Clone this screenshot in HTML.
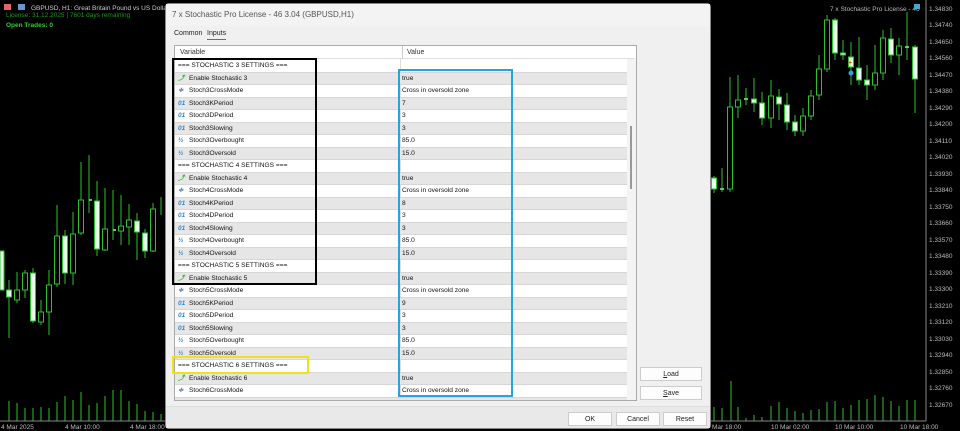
<!DOCTYPE html>
<html><head><meta charset="utf-8"><style>
*{margin:0;padding:0;box-sizing:border-box}
body{width:960px;height:431px;background:#000;position:relative;overflow:hidden;font-family:"Liberation Sans",sans-serif;font-size:7px}
.abs{position:absolute}
#dlg{left:165px;top:3px;width:546px;height:426px;background:#f0f0f0;border:1px solid #888;border-radius:4px}
#title{left:0;top:0;width:544px;height:22px;background:#f3f3f3;color:#555;font-size:8px;padding:6px 0 0 6px}
.tab{top:26px;font-size:7px;color:#222}
#tbl{left:8px;top:41px;width:463px;height:356px;background:#fff;border:1px solid #aaa;overflow:hidden}
.hdr{position:absolute;top:0;height:13px;left:0;width:460px;border-bottom:1px solid #ddd;background:#fff}
.row{position:absolute;left:0;width:452px;height:12.5px;line-height:12.5px;font-size:6.6px;color:#111}
.row.g{background:#e6e6e6;border-top:1px solid #d6d6d6;border-bottom:1px solid #d6d6d6}
.row span.v{position:absolute;left:227px}
.row span.n{position:absolute;left:14px}
.row span.h{position:absolute;left:3px}
.ic{position:absolute;left:3px;font-size:6.5px;font-weight:bold}
.btn{position:absolute;background:#fdfdfd;border:1px solid #ccc;font-size:7px;text-align:center;color:#222}
</style></head><body>
<svg class="abs" style="left:0;top:0" width="960" height="431">
<g stroke="#2fbf2f" stroke-width="1" fill="none">
<!-- left candles -->
<line x1="9" y1="280" x2="9" y2="338"/><line x1="17" y1="272" x2="17" y2="303"/><line x1="25" y1="270" x2="25" y2="298"/><line x1="33" y1="268" x2="33" y2="323"/><line x1="41" y1="300" x2="41" y2="325"/><line x1="49" y1="270" x2="49" y2="335"/><line x1="57" y1="205" x2="57" y2="287"/><line x1="65" y1="230" x2="65" y2="284"/><line x1="73" y1="212" x2="73" y2="285"/><line x1="81" y1="162" x2="81" y2="235"/><line x1="89" y1="155" x2="89" y2="213"/><line x1="97" y1="181" x2="97" y2="256"/><line x1="105" y1="188" x2="105" y2="251"/><line x1="113" y1="190" x2="113" y2="240"/><line x1="121" y1="195" x2="121" y2="245"/><line x1="129" y1="204" x2="129" y2="245"/><line x1="137" y1="213" x2="137" y2="260"/><line x1="145" y1="229" x2="145" y2="258"/><line x1="153" y1="203" x2="153" y2="252"/><line x1="161" y1="197" x2="161" y2="215"/>
<rect x="14.5" y="290" width="5" height="10" fill="#000"/><rect x="22.5" y="273" width="5" height="17" fill="#000"/><rect x="38.5" y="312" width="5" height="10" fill="#000"/><rect x="46.5" y="285" width="5" height="27" fill="#000"/><rect x="54.5" y="236" width="5" height="48" fill="#000"/><rect x="70.5" y="234" width="5" height="39" fill="#000"/><rect x="78.5" y="200" width="5" height="33" fill="#000"/><rect x="102.5" y="229" width="5" height="21" fill="#000"/><rect x="118.5" y="226" width="5" height="5" fill="#000"/><rect x="126.5" y="220" width="5" height="7" fill="#000"/><rect x="150.5" y="209" width="5" height="42" fill="#000"/>
<!-- right candles -->
<line x1="714" y1="176" x2="714" y2="193"/><line x1="722" y1="168" x2="722" y2="192"/><line x1="730" y1="77" x2="730" y2="192"/><line x1="738" y1="75" x2="738" y2="118"/><line x1="746" y1="88" x2="746" y2="105"/><line x1="754" y1="78" x2="754" y2="112"/><line x1="762" y1="92" x2="762" y2="125"/><line x1="771" y1="80" x2="771" y2="128"/><line x1="779" y1="89" x2="779" y2="120"/><line x1="787" y1="93" x2="787" y2="130"/><line x1="795" y1="115" x2="795" y2="136"/><line x1="803" y1="108" x2="803" y2="136"/><line x1="811" y1="90" x2="811" y2="120"/><line x1="819" y1="55" x2="819" y2="100"/><line x1="827" y1="15" x2="827" y2="72"/><line x1="835" y1="18" x2="835" y2="60"/><line x1="843" y1="40" x2="843" y2="60"/><line x1="851" y1="42" x2="851" y2="85"/><line x1="859" y1="37" x2="859" y2="85"/><line x1="867" y1="65" x2="867" y2="100"/><line x1="875" y1="45" x2="875" y2="90"/><line x1="883" y1="30" x2="883" y2="80"/><line x1="891" y1="28" x2="891" y2="63"/><line x1="899" y1="38" x2="899" y2="75"/><line x1="907" y1="12" x2="907" y2="60"/><line x1="915" y1="45" x2="915" y2="113"/>
<rect x="727.5" y="107" width="5" height="82" fill="#000"/><rect x="735.5" y="100" width="5" height="7" fill="#000"/><rect x="768.5" y="96" width="5" height="22" fill="#000"/><rect x="800.5" y="116" width="5" height="15" fill="#000"/><rect x="808.5" y="96" width="5" height="20" fill="#000"/><rect x="816.5" y="69" width="5" height="26" fill="#000"/><rect x="824.5" y="20" width="5" height="49" fill="#000"/><rect x="872.5" y="73" width="5" height="12" fill="#000"/><rect x="880.5" y="38" width="5" height="35" fill="#000"/><rect x="896.5" y="46" width="5" height="9" fill="#000"/>
<!-- volumes -->
<path d="M9 421V401M17 421V403M25 421V408M33 421V408M41 421V407M49 421V408M57 421V402M65 421V396M73 421V400M81 421V392M89 421V405M97 421V403M105 421V396M113 421V390M121 421V390M129 421V401M137 421V404M145 421V411M153 421V412M161 421V414M714 421V407M722 421V408M731 421V381M738 421V407M746 421V418M754 421V415M762 421V417M771 421V406M779 421V402M787 421V408M795 421V411M803 421V413M811 421V410M819 421V409M827 421V402M835 421V401M843 421V408M851 421V405M859 421V400M867 421V399M875 421V395M883 421V397M891 421V401M899 421V406M907 421V400M915 421V400"/>
</g>
<g fill="#e8ffe8" stroke="#2fbf2f" stroke-width="1">
<rect x="0" y="251" width="4" height="39"/><rect x="6.5" y="290" width="5" height="7"/><rect x="30.5" y="273" width="5" height="48"/><rect x="62.5" y="236" width="5" height="37"/><rect x="94.5" y="201" width="5" height="48"/><rect x="134.5" y="221" width="5" height="11"/><rect x="142.5" y="233" width="5" height="18"/>
<rect x="711.5" y="178" width="5" height="11"/><rect x="751.5" y="99" width="5" height="4"/><rect x="759.5" y="103" width="5" height="15"/><rect x="776.5" y="97" width="5" height="7"/><rect x="784.5" y="105" width="5" height="17"/><rect x="792.5" y="122" width="5" height="9"/><rect x="832.5" y="20" width="5" height="33"/><rect x="840.5" y="53" width="5" height="2"/><rect x="848.5" y="57" width="5" height="10"/><rect x="856.5" y="68" width="5" height="12"/><rect x="864.5" y="80" width="5" height="5"/><rect x="888.5" y="39" width="5" height="16"/><rect x="912.5" y="47" width="5" height="32"/>
</g>
<path d="M89 200h3M113 230h3M720 189h4M744 99h4M905 47h4" stroke="#7f7" stroke-width="1.5"/>
<text x="848" y="65" fill="#e05020" font-size="7" font-weight="bold">+</text>
<circle cx="851" cy="73" r="2.5" fill="#3a9ee0"/>
<line x1="926" y1="0" x2="926" y2="421" stroke="#888"/>
<line x1="0" y1="421" x2="926" y2="421" stroke="#888"/>
<g fill="#bbb" font-size="6.5" font-family="Liberation Sans">
<text x="929" y="11">1.34830</text><text x="929" y="27">1.34740</text><text x="929" y="44">1.34650</text><text x="929" y="60">1.34560</text><text x="929" y="77">1.34470</text><text x="929" y="93">1.34380</text><text x="929" y="110">1.34290</text><text x="929" y="126">1.34200</text><text x="929" y="143">1.34110</text><text x="929" y="159">1.34020</text><text x="929" y="176">1.33930</text><text x="929" y="192">1.33840</text><text x="929" y="209">1.33750</text><text x="929" y="225">1.33660</text><text x="929" y="242">1.33570</text><text x="929" y="258">1.33480</text><text x="929" y="275">1.33390</text><text x="929" y="291">1.33300</text><text x="929" y="308">1.33210</text><text x="929" y="324">1.33120</text><text x="929" y="341">1.33030</text><text x="929" y="357">1.32940</text><text x="929" y="374">1.32850</text><text x="929" y="390">1.32760</text><text x="929" y="407">1.32670</text>
<text x="1" y="429">4 Mar 2025</text><text x="65" y="429">4 Mar 10:00</text><text x="130" y="429">4 Mar 18:00</text><text x="712" y="429">Mar 18:00</text><text x="771" y="429">10 Mar 02:00</text><text x="835" y="429">10 Mar 10:00</text><text x="900" y="429">10 Mar 18:00</text>
<text x="830" y="11">7 x Stochastic Pro License - 46</text>
<text x="31" y="10" fill="#ccc">GBPUSD, H1:  Great Britain Pound vs US Dollar</text>
</g>
<rect x="4" y="4" width="7" height="6" fill="#d66"/><rect x="18" y="4" width="7" height="6" fill="#69c"/>
<rect x="914" y="4" width="6" height="5" fill="#4ac"/>
<text x="6" y="17" fill="#1a9a1a" font-size="6.5" font-family="Liberation Sans">License: 31.12.2025 | 7601 days remaining</text>
<text x="6" y="27" fill="#2fcf2f" font-size="6.5" font-weight="bold" font-family="Liberation Sans">Open Trades: 0</text>
</svg>

<div id="dlg" class="abs">
<div id="title" class="abs">7 x Stochastic Pro License - 46 3.04 (GBPUSD,H1)</div>
<div class="abs tab" style="left:8px">Common</div>
<div class="abs tab" style="left:41px;border-bottom:1px solid #2a7bd0;padding-bottom:2px">Inputs</div>
<div id="tbl" class="abs">
<div class="hdr"><span class="abs" style="left:5px;top:3px;color:#333">Variable</span><span class="abs" style="left:227px;top:3px;color:#333;border-left:1px solid #ccc;padding-left:4px;height:13px;top:0;line-height:13px">Value</span></div>
<div class="abs" style="left:225px;top:13px;width:1px;height:345px;background:#ddd"></div>

<div class="row" style="top:13.5px"><span class="h">=== STOCHASTIC 3 SETTINGS ===</span></div>
<div class="row g" style="top:26px"><i class="ic" style="color:#3a3">⤴</i><span class="n">Enable Stochastic 3</span><span class="v">true</span></div>
<div class="row" style="top:38.5px"><i class="ic" style="color:#57a">≑</i><span class="n">Stoch3CrossMode</span><span class="v">Cross in oversold zone</span></div>
<div class="row g" style="top:51px"><i class="ic" style="color:#38c">01</i><span class="n">Stoch3KPeriod</span><span class="v">7</span></div>
<div class="row" style="top:63.5px"><i class="ic" style="color:#38c">01</i><span class="n">Stoch3DPeriod</span><span class="v">3</span></div>
<div class="row g" style="top:76px"><i class="ic" style="color:#38c">01</i><span class="n">Stoch3Slowing</span><span class="v">3</span></div>
<div class="row" style="top:88.5px"><i class="ic" style="color:#38c">½</i><span class="n">Stoch3Overbought</span><span class="v">85.0</span></div>
<div class="row g" style="top:101px"><i class="ic" style="color:#38c">½</i><span class="n">Stoch3Oversold</span><span class="v">15.0</span></div>
<div class="row" style="top:113.5px"><span class="h">=== STOCHASTIC 4 SETTINGS ===</span></div>
<div class="row g" style="top:126px"><i class="ic" style="color:#3a3">⤴</i><span class="n">Enable Stochastic 4</span><span class="v">true</span></div>
<div class="row" style="top:138.5px"><i class="ic" style="color:#57a">≑</i><span class="n">Stoch4CrossMode</span><span class="v">Cross in oversold zone</span></div>
<div class="row g" style="top:151px"><i class="ic" style="color:#38c">01</i><span class="n">Stoch4KPeriod</span><span class="v">8</span></div>
<div class="row" style="top:163.5px"><i class="ic" style="color:#38c">01</i><span class="n">Stoch4DPeriod</span><span class="v">3</span></div>
<div class="row g" style="top:176px"><i class="ic" style="color:#38c">01</i><span class="n">Stoch4Slowing</span><span class="v">3</span></div>
<div class="row" style="top:188.5px"><i class="ic" style="color:#38c">½</i><span class="n">Stoch4Overbought</span><span class="v">85.0</span></div>
<div class="row g" style="top:201px"><i class="ic" style="color:#38c">½</i><span class="n">Stoch4Oversold</span><span class="v">15.0</span></div>
<div class="row" style="top:213.5px"><span class="h">=== STOCHASTIC 5 SETTINGS ===</span></div>
<div class="row g" style="top:226px"><i class="ic" style="color:#3a3">⤴</i><span class="n">Enable Stochastic 5</span><span class="v">true</span></div>
<div class="row" style="top:238.5px"><i class="ic" style="color:#57a">≑</i><span class="n">Stoch5CrossMode</span><span class="v">Cross in oversold zone</span></div>
<div class="row g" style="top:251px"><i class="ic" style="color:#38c">01</i><span class="n">Stoch5KPeriod</span><span class="v">9</span></div>
<div class="row" style="top:263.5px"><i class="ic" style="color:#38c">01</i><span class="n">Stoch5DPeriod</span><span class="v">3</span></div>
<div class="row g" style="top:276px"><i class="ic" style="color:#38c">01</i><span class="n">Stoch5Slowing</span><span class="v">3</span></div>
<div class="row" style="top:288.5px"><i class="ic" style="color:#38c">½</i><span class="n">Stoch5Overbought</span><span class="v">85.0</span></div>
<div class="row g" style="top:301px"><i class="ic" style="color:#38c">½</i><span class="n">Stoch5Oversold</span><span class="v">15.0</span></div>
<div class="row" style="top:313.5px"><span class="h">=== STOCHASTIC 6 SETTINGS ===</span></div>
<div class="row g" style="top:326px"><i class="ic" style="color:#3a3">⤴</i><span class="n">Enable Stochastic 6</span><span class="v">true</span></div>
<div class="row" style="top:338.5px"><i class="ic" style="color:#57a">≑</i><span class="n">Stoch6CrossMode</span><span class="v">Cross in oversold zone</span></div>
<div class="row g" style="top:351px"></div>
<div class="abs" style="left:452px;top:13px;width:9px;height:343px;background:#f4f4f4"></div>
<div class="abs" style="left:455px;top:80px;width:2px;height:63px;background:#999"></div>
</div>
<div class="btn" style="left:474px;top:363px;width:62px;height:14px;line-height:13px"><u>L</u>oad</div>
<div class="btn" style="left:474px;top:382px;width:62px;height:14px;line-height:13px"><u>S</u>ave</div>
<div class="abs" style="left:0;top:402px;width:544px;height:22px;background:#e9e9e9;border-top:1px solid #ddd"></div>
<div class="btn" style="left:402px;top:408px;width:44px;height:14px;line-height:13px">OK</div>
<div class="btn" style="left:450px;top:408px;width:44px;height:14px;line-height:13px">Cancel</div>
<div class="btn" style="left:497px;top:408px;width:44px;height:14px;line-height:13px">Reset</div>
</div>

<div class="abs" style="left:172px;top:58px;width:145px;height:227px;border:2px solid #000"></div>
<div class="abs" style="left:398px;top:69px;width:115px;height:328px;border:2px solid #29a3e0"></div>
<div class="abs" style="left:172px;top:356px;width:137px;height:18px;border:2px solid #f0e020"></div>
</body></html>
